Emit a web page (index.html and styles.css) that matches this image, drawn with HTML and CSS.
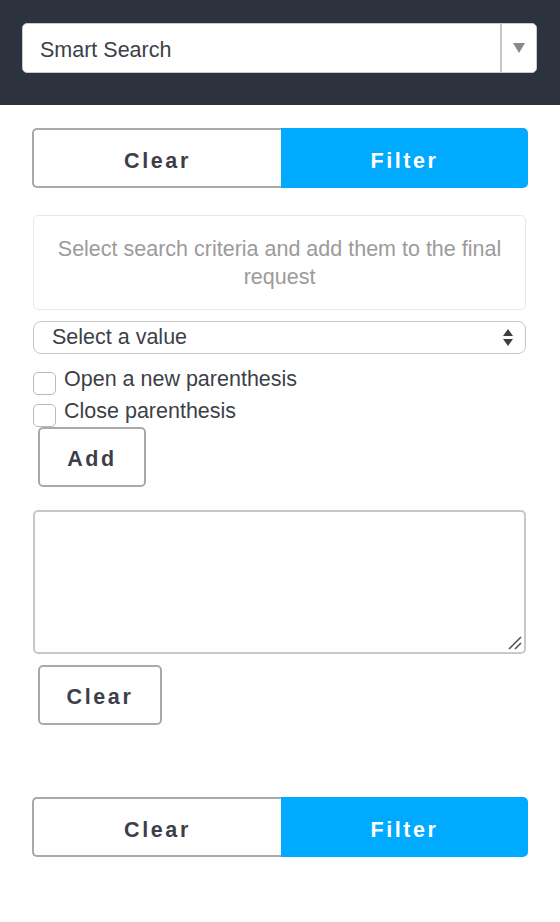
FILE: index.html
```html
<!DOCTYPE html>
<html>
<head>
<meta charset="utf-8">
<link rel="stylesheet" href="styles.css">
</head>
<body>
<header class="topbar">
  <div class="smart-select">
    <span class="smart-label">Smart Search</span>
    <span class="smart-toggle"><span class="tri-down"></span></span>
  </div>
</header>
<main class="panel">
  <div class="btn-pair">
    <button class="pair-clear">Clear</button>
    <button class="pair-filter">Filter</button>
  </div>
  <div class="info-box">Select search criteria and add them to the final request</div>
  <div class="value-select">
    <span class="value-label">Select a value</span>
    <span class="updown"><span class="up"></span><span class="down"></span></span>
  </div>
  <label class="check-row"><input type="checkbox" class="check"><span>Open a new parenthesis</span></label>
  <label class="check-row second"><input type="checkbox" class="check"><span>Close parenthesis</span></label>
  <button class="small-btn add-btn">Add</button>
  <div class="query-wrap">
    <textarea class="query"></textarea>
    <svg class="grip" width="14" height="14" viewBox="0 0 14 14"><path d="M1 13 L13 1 M7 13 L13 7" stroke="#555" stroke-width="1.6" fill="none"/></svg>
  </div>
  <button class="small-btn clear-btn">Clear</button>
  <div class="btn-pair bottom">
    <button class="pair-clear">Clear</button>
    <button class="pair-filter">Filter</button>
  </div>
</main>
</body>
</html>
```
FILE: styles.css
```css
* { box-sizing: border-box; }
body {
  margin: 0;
  font-family: "Liberation Sans", Arial, sans-serif;
  background: #ffffff;
  color: #3c3f4a;
}
.topbar {
  background: #2c333e;
  height: 105px;
  padding: 23px 23px 0 22px;
}
.smart-select {
  display: flex;
  height: 50px;
  background: #fff;
  border: 1px solid #c9c9c9;
  border-radius: 5px;
}
.smart-label {
  flex: 1;
  font-size: 21.5px;
  line-height: 44px;
  padding: 4px 0 0 17px;
  color: #3d3f48;
}
.smart-toggle {
  width: 36px;
  border-left: 2px solid #c8c8c8;
  display: flex;
  align-items: center;
  justify-content: center;
}
.tri-down {
  width: 0; height: 0;
  border-left: 6px solid transparent;
  border-right: 6px solid transparent;
  border-top: 10px solid #888;
}
.panel {
  padding: 23px 32px 0 32px;
}
.btn-pair {
  display: flex;
  height: 60px;
}
.btn-pair button {
  flex: 1;
  font-family: "Liberation Sans", Arial, sans-serif;
  font-weight: bold;
  font-size: 21.5px;
  letter-spacing: 2.6px;
  padding-top: 7px;
  cursor: pointer;
}
.pair-clear {
  background: #fff;
  color: #3c3f4a;
  border: 2px solid #a9a9a9;
  border-right: none;
  border-radius: 5px 0 0 5px;
}
.pair-filter {
  background: #00aaff;
  color: #fff;
  border: none;
  border-radius: 0 5px 5px 0;
}
.info-box {
  margin: 27px 2px 0 1px;
  border: 1.5px solid #e5e8ed;
  border-radius: 5px;
  padding: 19px 8px 18px;
  text-align: center;
  font-size: 21.5px;
  line-height: 28px;
  color: #9b9b9b;
}
.value-select {
  margin: 11px 2px 0 1px;
  height: 33px;
  border: 1.5px solid #c6c6c6;
  border-radius: 8px;
  display: flex;
  align-items: center;
  justify-content: space-between;
  padding: 0 12px 0 18px;
}
.value-label {
  font-size: 21.5px;
  color: #3d3f48;
}
.updown {
  display: flex;
  flex-direction: column;
  gap: 3px;
}
.updown .up {
  width: 0; height: 0;
  border-left: 5px solid transparent;
  border-right: 5px solid transparent;
  border-bottom: 7px solid #3d3f48;
}
.updown .down {
  width: 0; height: 0;
  border-left: 5px solid transparent;
  border-right: 5px solid transparent;
  border-top: 7px solid #3d3f48;
}
.check-row {
  display: flex;
  align-items: flex-start;
  margin-top: 13px;
  font-size: 21.5px;
  line-height: 24px;
  color: #3d3f48;
  height: 24px;
}
.check-row.second {
  margin-top: 8px;
}
.check {
  appearance: none;
  -webkit-appearance: none;
  width: 23px;
  height: 23px;
  margin: 5px 8px 0 1px;
  border: 1px solid #b9b9b9;
  border-radius: 5px;
  background: #fff;
  flex: none;
}
.small-btn {
  display: block;
  height: 60px;
  margin-left: 6px;
  background: #fff;
  border: 2px solid #a9a9a9;
  border-radius: 5px;
  font-family: "Liberation Sans", Arial, sans-serif;
  font-weight: bold;
  font-size: 21.5px;
  letter-spacing: 2.6px;
  padding-top: 5px;
  color: #3c3f4a;
}
.add-btn {
  margin-top: 4px;
  width: 108px;
}
.query-wrap {
  position: relative;
  margin: 23px 2px 0 1px;
}
.query {
  display: block;
  width: 100%;
  height: 144px;
  border: 2px solid #c8c8c8;
  border-radius: 5px;
  resize: none;
  font-family: "Liberation Sans", Arial, sans-serif;
  font-size: 20px;
}
.grip {
  position: absolute;
  right: 4px;
  bottom: 4px;
}
.clear-btn {
  margin-top: 11px;
  width: 124px;
}
.btn-pair.bottom {
  margin-top: 72px;
}
```
